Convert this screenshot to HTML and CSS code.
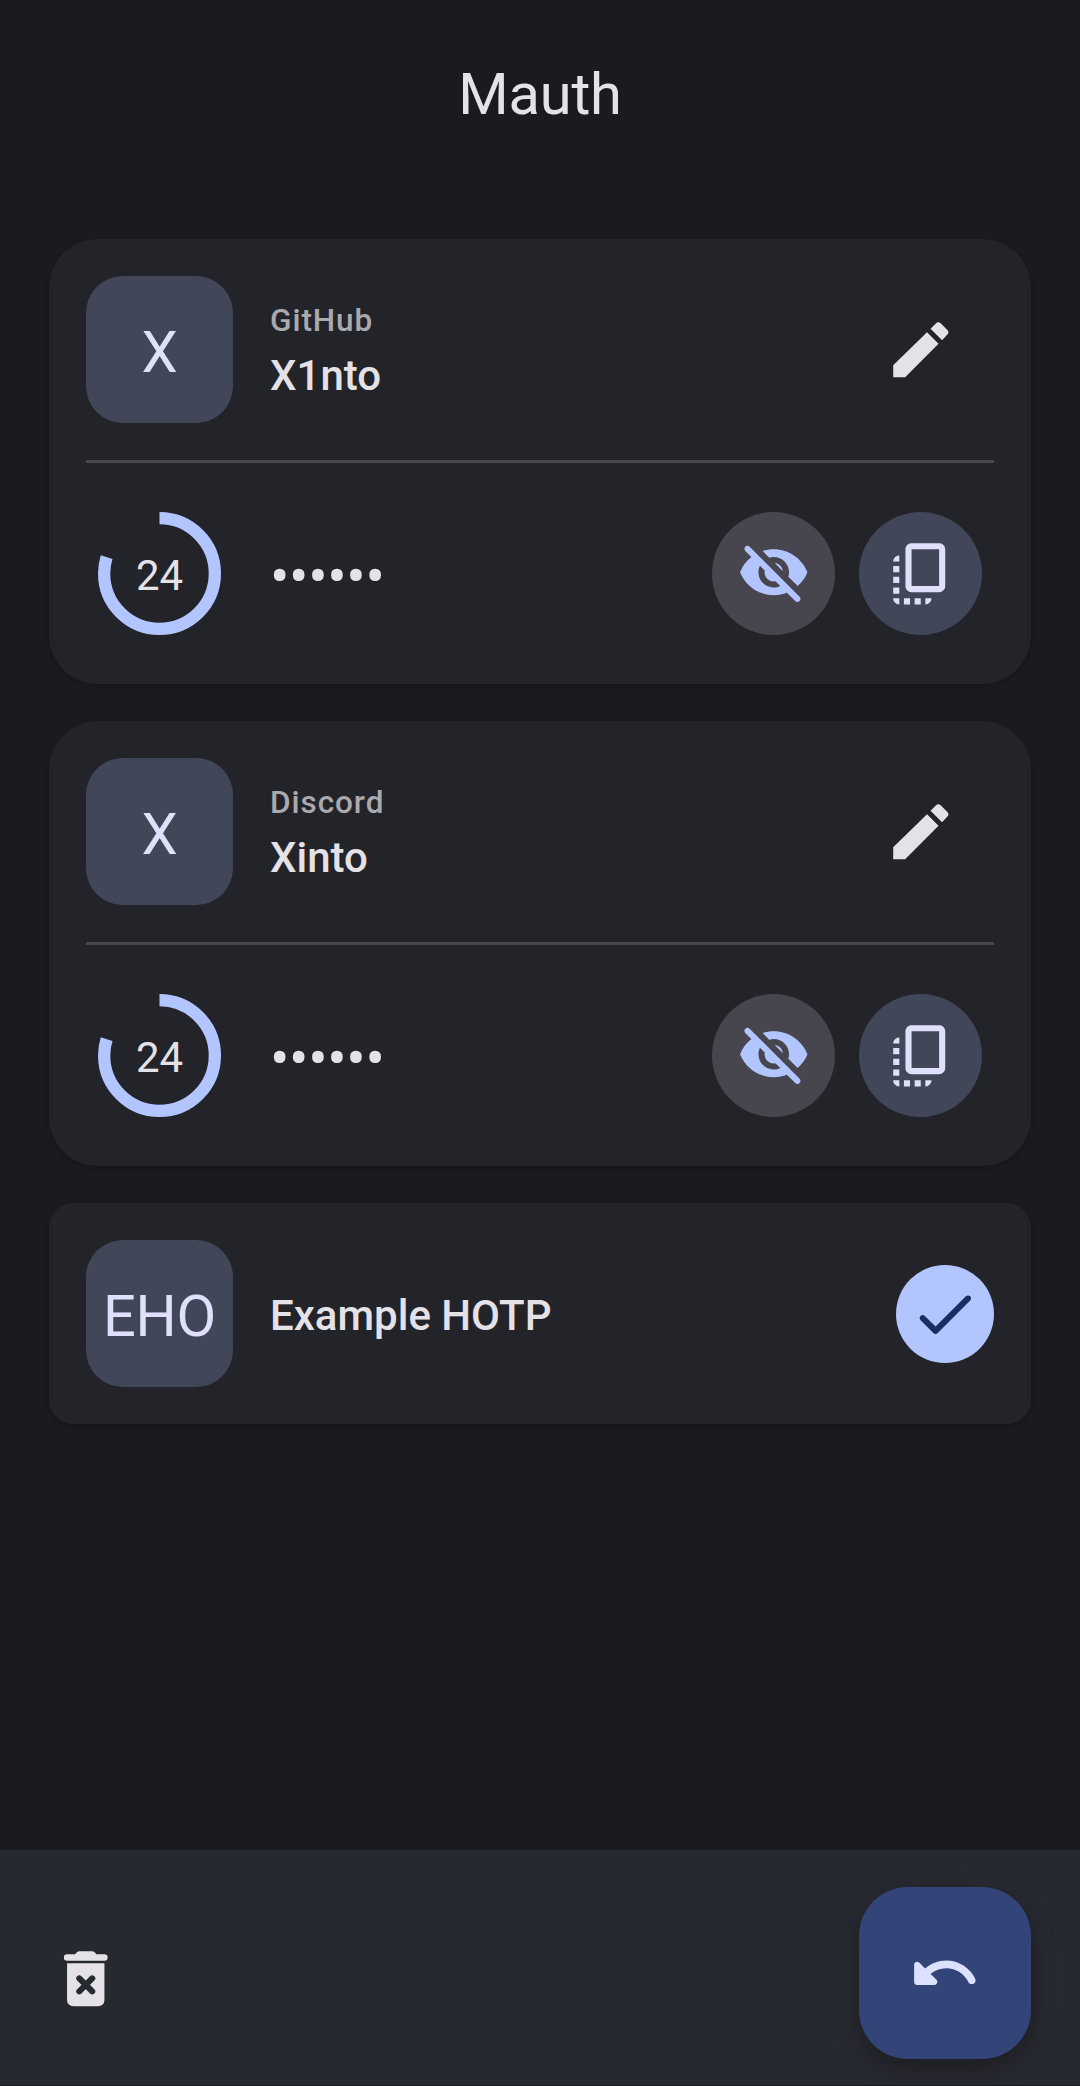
FILE: index.html
```html
<!DOCTYPE html>
<html lang="en">
<head>
<meta charset="utf-8">
<title>Mauth</title>
<link rel="stylesheet" href="styles.css">
</head>
<body>
<svg class="sprite" aria-hidden="true">
  <symbol id="edit" viewBox="0 0 24 24"><path d="M3 17.1V21h3.9L17.8 10.05 14.05 6.3zM15.2 5.15l1.8-1.8a1.1 1.1 0 0 1 1.5 0l2.2 2.2a1.1 1.1 0 0 1 0 1.5L18.95 8.9z"/></symbol>
  <symbol id="eye-off" viewBox="0 0 24 24"><path d="M12 6.5c2.76 0 5 2.24 5 5 0 .51-.1 1-.24 1.46l3.06 3.06c1.39-1.23 2.49-2.77 3.18-4.53C21.27 7.11 17 4 12 4c-1.27 0-2.49.2-3.64.57l2.17 2.17c.47-.14.96-.24 1.47-.24zM2.71 3.16c-.39.39-.39 1.02 0 1.41l1.97 1.97C3.06 7.83 1.77 9.53 1 11.5 2.73 15.89 7 19 12 19c1.52 0 2.97-.3 4.31-.82l2.72 2.72c.39.39 1.02.39 1.41 0 .39-.39.39-1.02 0-1.41L4.13 3.16c-.39-.39-1.03-.39-1.42 0zM12 16.5c-2.76 0-5-2.24-5-5 0-.77.18-1.5.49-2.14l1.57 1.57c-.03.18-.06.37-.06.57 0 1.66 1.34 3 3 3 .2 0 .38-.02.57-.07L14.14 16c-.65.32-1.37.5-2.14.5zm2.97-5.33c-.15-1.4-1.25-2.49-2.64-2.64l2.64 2.64z"/></symbol>
  <symbol id="copy" viewBox="0 0 24 24"><path d="M18 2H9C7.9 2 7 2.9 7 4v12c0 1.1.9 2 2 2h9c1.1 0 2-.9 2-2V4C20 2.9 19.1 2 18 2zM18 16H9V4h9V16zM3 15v-2h2v2H3zM3 9.5h2v2H3V9.5zM10 20h2v2h-2V20zM3 18.5v-2h2v2H3zM5 22c-1.1 0-2-.9-2-2h2V22zM8.5 22h-2v-2h2V22zM13.5 22v-2h2C15.5 21.1 14.6 22 13.5 22zM5 6v2H3C3 6.9 3.9 6 5 6z"/></symbol>
  <symbol id="check" viewBox="0 0 24 24"><path d="M9 16.2l-3.5-3.5c-.39-.39-1.01-.39-1.4 0-.39.39-.39 1.01 0 1.4l4.19 4.2c.39.39 1.02.39 1.41 0L20.3 7.7c.39-.39.39-1.01 0-1.4-.39-.39-1.01-.39-1.4 0L9 16.2z"/></symbol>
  <symbol id="undo" viewBox="0 0 24 24"><path d="M12.5 8c-2.65 0-5.05.99-6.9 2.6L3.71 8.71C3.08 8.08 2 8.52 2 9.41V15c0 .55.45 1 1 1h5.59c.89 0 1.34-1.08.71-1.71l-1.91-1.91c1.39-1.16 3.16-1.88 5.12-1.88 3.16 0 5.89 1.84 7.19 4.5.27.56.91.84 1.5.64.71-.23 1.07-1.04.75-1.72C20.23 10.42 16.65 8 12.5 8z"/></symbol>
  <symbol id="delete" viewBox="0 0 24 24"><path d="M5.9 4h2.6l.6-.65q.35-.35.85-.35h4.1q.5 0 .85.35l.6.65h2.6a1.05 1.05 0 0 1 0 2.1H5.9a1.05 1.05 0 0 1 0-2.1zM5.9 6.95h12.2V19a2 2 0 0 1-2 2H7.9a2 2 0 0 1-2-2z"/><path class="cross" d="M9.9 11.9l4.2 4.2M14.1 11.9l-4.2 4.2"/></symbol>
</svg>

<header class="top-bar"><h1 class="title">Mauth</h1></header>

<main class="accounts">
  <section class="card">
    <div class="account">
      <div class="avatar">X</div>
      <div class="labels">
        <div class="issuer">GitHub</div>
        <div class="name">X1nto</div>
      </div>
      <button class="edit" aria-label="Edit"><svg class="icon"><use href="#edit"/></svg></button>
    </div>
    <hr class="divider">
    <div class="code-row">
      <div class="timer">
        <svg class="ring" viewBox="0 0 40 40"><circle cx="20" cy="20" r="18" pathLength="100" /></svg>
        <span class="seconds">24</span>
      </div>
      <div class="code">••••••</div>
      <button class="round show" aria-label="Show code"><svg class="icon"><use href="#eye-off"/></svg></button>
      <button class="round copy" aria-label="Copy code"><svg class="icon"><use href="#copy"/></svg></button>
    </div>
  </section>

  <section class="card">
    <div class="account">
      <div class="avatar">X</div>
      <div class="labels">
        <div class="issuer">Discord</div>
        <div class="name">Xinto</div>
      </div>
      <button class="edit" aria-label="Edit"><svg class="icon"><use href="#edit"/></svg></button>
    </div>
    <hr class="divider">
    <div class="code-row">
      <div class="timer">
        <svg class="ring" viewBox="0 0 40 40"><circle cx="20" cy="20" r="18" pathLength="100" /></svg>
        <span class="seconds">24</span>
      </div>
      <div class="code">••••••</div>
      <button class="round show" aria-label="Show code"><svg class="icon"><use href="#eye-off"/></svg></button>
      <button class="round copy" aria-label="Copy code"><svg class="icon"><use href="#copy"/></svg></button>
    </div>
  </section>

  <section class="card selected">
    <div class="account">
      <div class="avatar">EHO</div>
      <div class="labels"><div class="name">Example HOTP</div></div>
      <div class="selected-mark"><svg class="icon"><use href="#check"/></svg></div>
    </div>
  </section>
</main>

<footer class="bottom-bar">
  <button class="delete" aria-label="Delete"><svg class="icon"><use href="#delete"/></svg></button>
  <button class="fab" aria-label="Undo"><svg class="icon"><use href="#undo"/></svg></button>
</footer>
</body>
</html>
```
FILE: styles.css
```css
* { box-sizing: border-box; }

body {
  margin: 0;
  height: 2086px;
  padding-bottom: 1px;
  display: flex;
  flex-direction: column;
  background: #1b1b1f;
  color: #e4e2e6;
  font-family: Roboto, "Liberation Sans", sans-serif;
  font-size: 42px;
  overflow: hidden;
}

button {
  border: 0;
  padding: 0;
  background: none;
  color: inherit;
  display: grid;
  place-items: center;
  flex: none;
}

.sprite { display: none; }

.icon {
  display: block;
  width: 73.5px;
  height: 73.5px;
  fill: currentColor;
}

.top-bar {
  height: 239px;
  padding-top: 59px;
  text-align: center;
}

.title {
  margin: 0;
  font-size: 57.75px;
  line-height: 70px;
  font-weight: 400;
  letter-spacing: -.2px;
}

.accounts {
  flex: 1;
  padding: 0 49px;
  display: flex;
  flex-direction: column;
  gap: 37px;
}

.card {
  padding: 37px;
  border-radius: 49px;
  background: #23242a;
  box-shadow: 0 2px 5px rgba(0, 0, 0, .2);
}

.card.selected { border-radius: 24.5px; }

.account {
  display: flex;
  align-items: center;
  gap: 37px;
}

.avatar {
  width: 147px;
  height: 147px;
  flex: none;
  display: grid;
  place-items: center;
  border-radius: 37px;
  background: #424659;
  color: #dee1f9;
  font-size: 57.75px;
  line-height: 70px;
  letter-spacing: -.3px;
  padding-top: 5px;
}

.labels {
  flex: 1;
  padding-top: 4px;
}

.issuer {
  padding-top: 2px;
  color: #aaa9ad;
  font-size: 31.5px;
  line-height: 46px;
  font-weight: 500;
  letter-spacing: .95px;
}

.name {
  font-weight: 500;
  line-height: 63px;
}

.edit {
  width: 147px;
  height: 147px;
}

.divider {
  height: 3px;
  margin: 37px 0 49px;
  border: 0;
  background: #49464c;
}

.code-row {
  display: flex;
  align-items: center;
  padding: 0 12px 12px;
}

.timer {
  width: 123px;
  height: 123px;
  display: grid;
  place-items: center;
}

.ring, .seconds { grid-area: 1 / 1; }

.ring {
  width: 123px;
  height: 123px;
  transform: rotate(-90deg);
}

.ring circle {
  fill: none;
  stroke: #b3c5ff;
  stroke-width: 4;
  stroke-dasharray: 80.2 100;
}

.seconds { padding-top: 4px; }

.code {
  flex: 1;
  margin-left: 49px;
  padding-top: 5px;
  font-size: 57.75px;
  line-height: 62px;
  letter-spacing: -.4px;
}

.round {
  width: 123px;
  height: 123px;
  border-radius: 50%;
}

.show { background: #47464f; color: #b3c5ff; }
.copy { margin-left: 24px; background: #424659; color: #dee1f9; }

.selected-mark {
  width: 98px;
  height: 98px;
  display: grid;
  place-items: center;
  border-radius: 50%;
  background: #b3c5ff;
  color: #182e60;
}

.bottom-bar {
  height: 235px;
  padding: 37px 49px 26px;
  display: flex;
  justify-content: space-between;
  align-items: center;
  background: #272930;
  overflow: hidden;
}

.delete { margin-top: 12px; }

.cross {
  stroke: #272930;
  stroke-width: 2;
  stroke-linecap: round;
}

.fab {
  width: 172px;
  height: 172px;
  border-radius: 49px;
  background: #324478;
  color: #dbe1ff;
  box-shadow: 0 9px 24px rgba(0, 0, 0, .27);
}
```
